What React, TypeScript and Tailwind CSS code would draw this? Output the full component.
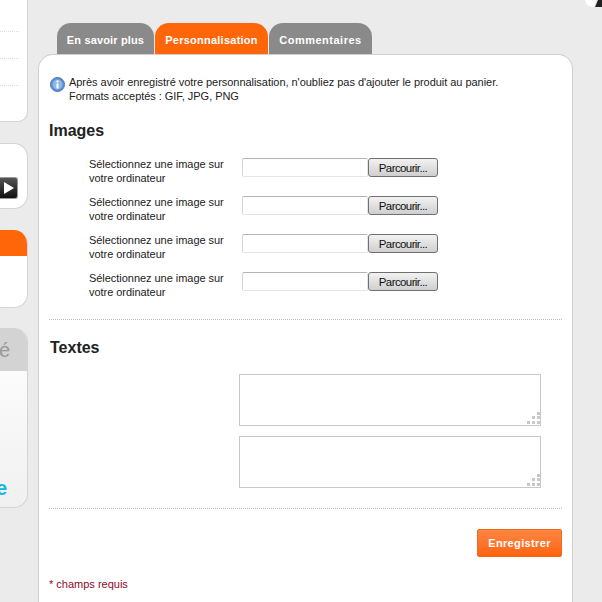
import React from 'react';

const FileRow: React.FC = () => (
  <div className="flex h-[38px] items-start pl-[40px]">
    <p className="w-[153px] text-[11px] leading-[14px] tracking-[-0.04px] text-[#222]">
      Sélectionnez une image sur votre ordinateur
    </p>
    <div className="mt-[1px] h-[19px] w-[126px] rounded-[2px] border border-[#e3e5ea] border-t-[#b4b4b8] border-l-[#d6d6da] bg-white" />
    <button className="mt-[1px] h-[19px] w-[70px] rounded-[3px] border border-[#707070] bg-gradient-to-b from-[#f2f2f2] to-[#cfcfcf] text-[11.5px] leading-[16px] tracking-[-0.6px] text-[#111]">
      Parcourir...
    </button>
  </div>
);

const Grip: React.FC = () => (
  <svg className="absolute right-0 bottom-0" width="14" height="14" viewBox="0 0 14 14" fill="#c8c8c8">
    <rect x="11" y="1" width="3" height="3" />
    <rect x="6" y="5" width="3" height="3" />
    <rect x="11" y="5" width="3" height="3" />
    <rect x="1" y="10" width="3" height="3" />
    <rect x="6" y="10" width="3" height="3" />
    <rect x="11" y="10" width="3" height="3" />
  </svg>
);

const TextArea: React.FC = () => (
  <div className="relative ml-[190px] h-[52px] w-[302px] border border-[#c8c8c8] bg-white">
    <Grip />
  </div>
);

const Sidebar: React.FC = () => (
  <aside className="flex w-[28px] shrink-0 flex-col">
    <div className="mt-[-10px] flex h-[132px] flex-col rounded-br-[10px] border-r border-b border-[#d4d4d4] bg-white pt-[41px]">
      <div className="h-[27px] w-[19px] border-t border-dotted border-[#dcdcdc]" />
      <div className="h-[27px] w-[19px] border-t border-dotted border-[#dcdcdc]" />
      <div className="w-[19px] border-t border-dotted border-[#dcdcdc]" />
    </div>
    <div className="mt-[21px] h-[66px] rounded-r-[14px] border-y border-r border-[#d4d4d4] bg-white pt-[33px]">
      <div className="flex h-[22px] w-[18px] items-center justify-end rounded-r-[3px] border border-l-0 border-[#999] bg-gradient-to-b from-[#555] to-[#111] pr-[3px]">
        <svg width="10" height="12" viewBox="0 0 10 12" fill="#fff">
          <path d="M0 0l10 6-10 6z" />
        </svg>
      </div>
    </div>
    <div className="mt-[21px] h-[78px] overflow-hidden rounded-r-[14px] border-r border-b border-[#d4d4d4] bg-white">
      <div className="h-[26px] bg-[#ff660a]" />
    </div>
    <div className="mt-[20px] h-[180px] overflow-hidden rounded-r-[14px] border-r border-b border-[#d4d4d4] bg-gradient-to-b from-white to-[#f0f0f0]">
      <div className="flex h-[43px] items-center justify-end bg-[#d3d3d3] pr-[17px]">
        <span className="text-[20px] leading-none whitespace-nowrap text-[#999]">sé</span>
      </div>
      <div className="mt-[105px] ml-[-4px] text-[20px] leading-[24px] font-bold text-[#14b8dc]">e</div>
    </div>
  </aside>
);

export default function App(): React.ReactElement {
  return (
    <div className="relative flex h-[602px] w-[602px] overflow-hidden bg-[#ebebeb] font-['Liberation_Sans',Arial,sans-serif]">
      <Sidebar />
      <main className="ml-[10px] w-[535px] shrink-0 pt-[23px]">
        <div className="flex gap-[1px] pl-[19px]">
          <div className="flex h-[31px] w-[97px] items-center justify-center rounded-t-[14px] bg-[#8a8a8a] pt-[4px] text-[11px] font-bold tracking-[0.15px] text-white">
            En savoir plus
          </div>
          <div className="flex h-[31px] w-[113px] items-center justify-center rounded-t-[14px] bg-[#ff660a] pt-[4px] text-[11px] font-bold tracking-[0.25px] text-white">
            Personnalisation
          </div>
          <div className="flex h-[31px] w-[103px] items-center justify-center rounded-t-[14px] bg-[#8a8a8a] pt-[4px] text-[11px] font-bold tracking-[0.5px] text-white">
            Commentaires
          </div>
        </div>
        <div className="h-[560px] rounded-t-[15px] border-t border-r border-l border-[#cfcfcf] bg-white pt-[20px] pr-[10px] pl-[10px]">
          <div className="flex items-start pl-[1px]">
            <svg className="mt-[2px] shrink-0" width="15" height="15" viewBox="0 0 15 15">
              <circle cx="7.5" cy="7.5" r="7" fill="#5b8fd0" stroke="#4a76b0" />
              <circle cx="7.5" cy="7.5" r="5" fill="#8fb6e4" />
              <rect x="6.5" y="6.5" width="2" height="5" fill="#fff" />
              <rect x="6.5" y="3.5" width="2" height="2" fill="#fff" />
            </svg>
            <p className="ml-[4px] text-[11px] leading-[14px] tracking-[-0.04px] text-[#222]">
              Après avoir enregistré votre personnalisation, n'oubliez pas d'ajouter le produit au panier.
              <br />
              Formats acceptés : GIF, JPG, PNG
            </p>
          </div>
          <h3 className="mt-[18px] text-[16px] leading-[20px] font-bold text-[#222]">Images</h3>
          <div className="mt-[16px]">
            <FileRow />
            <FileRow />
            <FileRow />
            <FileRow />
          </div>
          <div className="mt-[10px] border-t border-dotted border-[#bbb]" />
          <h3 className="mt-[18px] ml-[1px] text-[16px] leading-[20px] font-bold text-[#222]">Textes</h3>
          <div className="mt-[16px] flex flex-col gap-[10px]">
            <TextArea />
            <TextArea />
          </div>
          <div className="mt-[20px] border-t border-dotted border-[#bbb]" />
          <div className="mt-[20px] flex justify-end">
            <button className="h-[28px] w-[85px] rounded-[2px] border border-[#f06a1c] bg-gradient-to-b from-[#ff8640] to-[#ff6208] text-[11px] font-bold tracking-[0.35px] text-white">
              Enregistrer
            </button>
          </div>
          <p className="mt-[20px] text-[11px] leading-[14px] text-[#8c0a2a]">* champs requis</p>
        </div>
      </main>
      <svg className="absolute top-0 right-0" width="18" height="8" viewBox="0 0 18 8">
        <path d="M1 0c1 5 4 7 9 7l2-7z" fill="#fff" />
        <path d="M11 7l3-7h4v7z" fill="#222" />
      </svg>
    </div>
  );
}
